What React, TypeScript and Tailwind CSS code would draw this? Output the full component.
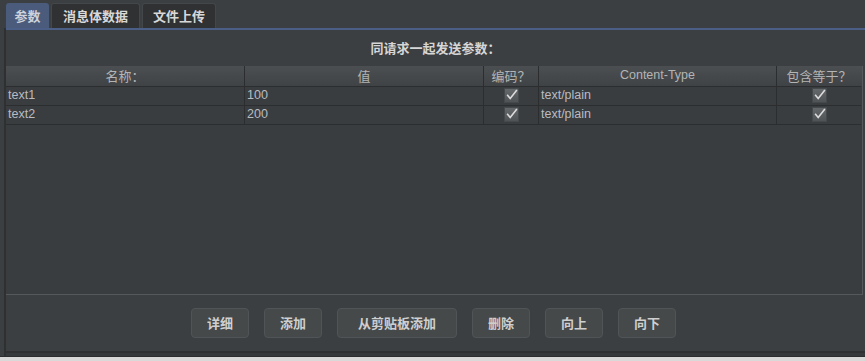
import React from "react";

const cjk = { fontFamily: '"Noto Sans CJK SC", "Noto Sans", sans-serif' };
const latin = { fontFamily: '"Liberation Sans", "Noto Sans CJK SC", sans-serif' };

const cols = "grid grid-cols-[239px_239px_55px_238px_84px]";

function Check() {
  return (
    <div className="w-[15px] h-[15px] bg-gradient-to-b from-[#65686b] to-[#505356] border border-[#46494c] flex items-center justify-center">
      <svg width="14" height="14" viewBox="0 0 14 14">
        <path d="M2.3 6.8 L5.6 10.8 L12.8 1.5" fill="none" stroke="#dcdcdc" strokeWidth="1.7" strokeLinejoin="miter" />
      </svg>
    </div>
  );
}

const rows = [
  { name: "text1", value: "100" },
  { name: "text2", value: "200" },
];

const buttons = ["详细", "添加", "从剪贴板添加", "删除", "向上", "向下"];

export default function App() {
  return (
    <div className="w-[865px] h-[361px] bg-[#3c3f41] flex flex-col text-[#bbbbbb]">
      <div className="h-[28px] pt-[3px] pl-[6px] flex gap-[2px] text-[13px] font-bold" style={cjk}>
        <div className="w-[43px] rounded-t-[3px] bg-[#4a5b7b] text-[#cdd2dc] flex items-center justify-center">参数</div>
        <div className="w-[89px] rounded-t-[3px] bg-[#2f3133] border border-b-0 border-[#444749] text-[#d8d8d8] flex items-center justify-center">消息体数据</div>
        <div className="w-[74px] rounded-t-[3px] bg-[#2f3133] border border-b-0 border-[#444749] text-[#d8d8d8] flex items-center justify-center">文件上传</div>
      </div>
      <div className="flex-1 flex flex-col ml-[4px] border-l-2 border-[#2e3032]">
        <div className="h-[2px] bg-[#4b5f86]" />
        <div className="h-[36px] flex items-center justify-center text-[13px] font-bold text-[#d6d6d6]" style={cjk}>
          同请求一起发送参数：
        </div>
        <div className="h-[229px] w-[857px] border-r border-b border-[#56595c] bg-[#3a3d3f]">
          <div className={`${cols} h-[20px] bg-gradient-to-b from-[#4c4f52] to-[#404346] text-[13px] text-[#b4b4b4]`} style={cjk}>
            <div className="border-r border-b border-[#2b2d2f] flex items-center justify-center">名称：</div>
            <div className="border-r border-b border-[#2b2d2f] flex items-center justify-center">值</div>
            <div className="border-r border-b border-[#2b2d2f] flex items-center justify-center">编码？</div>
            <div className="border-r border-b border-[#2b2d2f] flex items-center justify-center text-[12.5px]" style={latin}>Content-Type</div>
            <div className="border-b border-[#2b2d2f] flex items-center justify-center">包含等于？</div>
          </div>
          {rows.map((r) => (
            <div key={r.name} className={`${cols} h-[19px] text-[12.5px] text-[#b8bcc2]`} style={latin}>
              <div className="border-r border-b border-[#2b2d2f] pl-[2px] flex items-center">{r.name}</div>
              <div className="border-r border-b border-[#2b2d2f] pl-[2px] flex items-center">{r.value}</div>
              <div className="border-r border-b border-[#2b2d2f] flex items-center justify-center"><Check /></div>
              <div className="border-r border-b border-[#2b2d2f] pl-[2px] flex items-center">text/plain</div>
              <div className="border-b border-[#2b2d2f] flex items-center justify-center"><Check /></div>
            </div>
          ))}
        </div>
        <div className="flex-1 flex items-center justify-center gap-[15px] pr-[4px]">
          {buttons.map((b) => (
            <div
              key={b}
              className={`h-[30px] ${b.length > 2 ? "w-[120px]" : "w-[58px]"} rounded-[4px] bg-[#45494a] border border-[#505456] flex items-center justify-center text-[13px] font-bold text-[#cfcfcf]`}
              style={cjk}
            >
              {b}
            </div>
          ))}
        </div>
        <div className="h-[2px] bg-[#2e3032]" />
        <div className="h-[3px] bg-[#36393b]" />
      </div>
      <div className="h-[1px] bg-[#2b2d2f]" />
      <div className="h-[4px] bg-[#d9d9d9]" />
    </div>
  );
}
